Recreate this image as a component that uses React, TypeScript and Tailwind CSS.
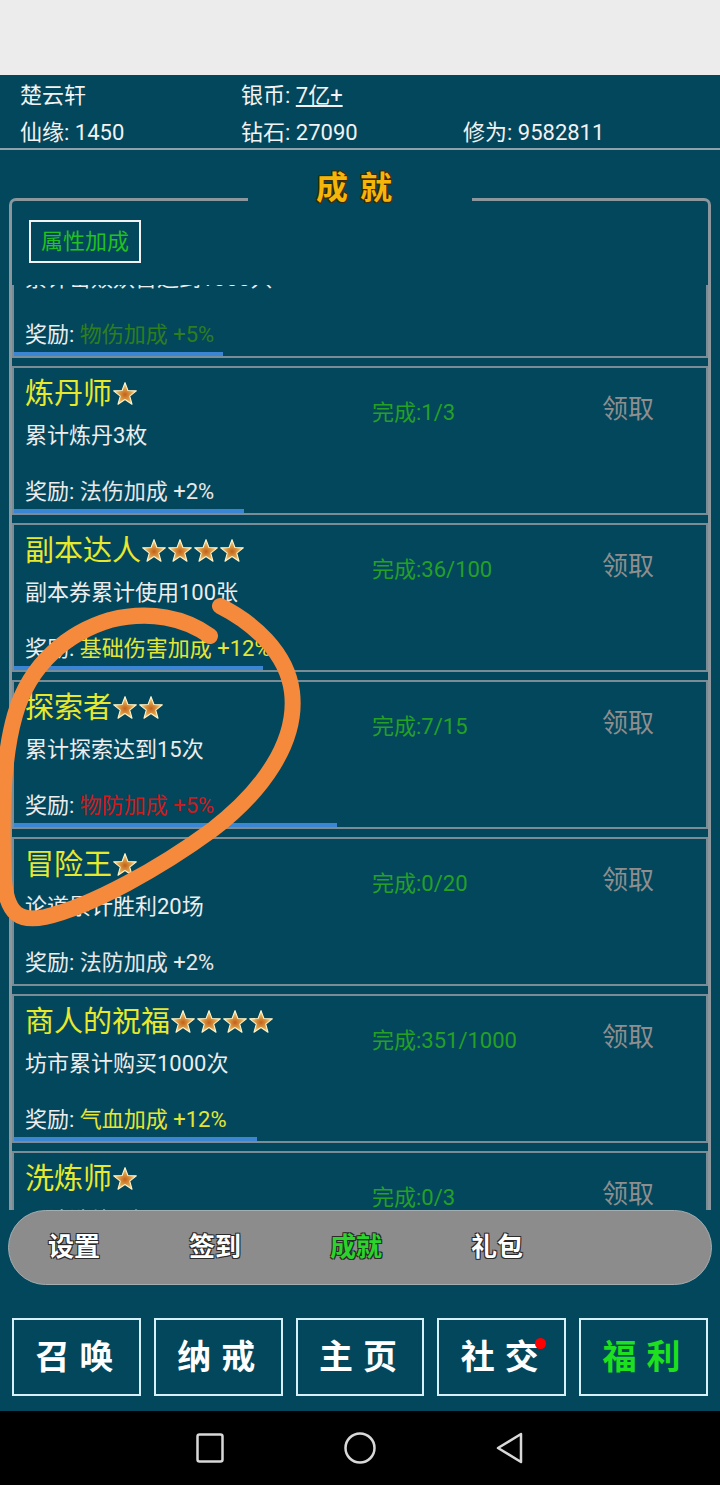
import React from "react";

type Ach = {
  title: string;
  stars: number;
  desc: string;
  done: string;
  reward: string;
  color: string;
  pct: number;
};

const cards: Ach[] = [
  { title: "猎妖者", stars: 1, desc: "累计击败妖兽达到1000只", done: "完成:300/1000", reward: "物伤加成 +5%", color: "text-[#2e7e1e]", pct: 30.2 },
  { title: "炼丹师", stars: 1, desc: "累计炼丹3枚", done: "完成:1/3", reward: "法伤加成 +2%", color: "text-[#e8e8e8]", pct: 33.3 },
  { title: "副本达人", stars: 4, desc: "副本券累计使用100张", done: "完成:36/100", reward: "基础伤害加成 +12%", color: "text-[#e5e633]", pct: 36 },
  { title: "探索者", stars: 2, desc: "累计探索达到15次", done: "完成:7/15", reward: "物防加成 +5%", color: "text-[#d01a1a]", pct: 46.7 },
  { title: "冒险王", stars: 1, desc: "论道累计胜利20场", done: "完成:0/20", reward: "法防加成 +2%", color: "text-[#e8e8e8]", pct: 0 },
  { title: "商人的祝福", stars: 4, desc: "坊市累计购买1000次", done: "完成:351/1000", reward: "气血加成 +12%", color: "text-[#e5e633]", pct: 35.1 },
  { title: "洗炼师", stars: 1, desc: "累计洗炼3次", done: "完成:0/3", reward: "暴击加成 +2%", color: "text-[#e8e8e8]", pct: 0 },
];

function Star() {
  return (
    <svg width="26" height="26" viewBox="0 0 24 24" className="shrink-0">
      <defs>
        <radialGradient id="sg" cx="50%" cy="55%" r="55%">
          <stop offset="0%" stopColor="#c4601a" />
          <stop offset="50%" stopColor="#dea048" />
          <stop offset="100%" stopColor="#fcedb8" />
        </radialGradient>
      </defs>
      <polygon
        points="12,1.5 14.7,8.78 22.46,9.1 16.37,13.92 18.47,21.4 12,17.1 5.53,21.4 7.63,13.92 1.54,9.1 9.3,8.78"
        fill="url(#sg)"
        stroke="#fff4c8"
        strokeWidth="1"
        strokeLinejoin="round"
      />
    </svg>
  );
}

function Card({ a }: { a: Ach }) {
  return (
    <div className="h-[149px] shrink-0 border-2 border-[#7a8d97] flex flex-col">
      <div className="flex pl-[11px]">
        <div className="w-[347px]">
          <div className="pt-[10px] flex items-center h-[42px]">
            <span className="text-[29px] leading-[32px] text-[#e9e92c]">{a.title}</span>
            {Array.from({ length: a.stars }).map((_, i) => (
              <Star key={i} />
            ))}
          </div>
          <div className="mt-[12px] text-[22px] leading-[28px] text-[#ededed]">{a.desc}</div>
        </div>
        <div className="w-[230px] pt-[31px] text-[22px] leading-[28px] text-[#25a025]">{a.done}</div>
        <div className="pt-[26px] text-[26px] leading-[30px] text-[#8e8e8e]">领取</div>
      </div>
      <div className="pl-[11px] mt-[28px] text-[22px] leading-[28px] text-[#ededed]">
        奖励: <span className={a.color}>{a.reward}</span>
      </div>
      <div className="mt-auto h-[4px]">
        <div className="h-full bg-[#3a86d4]" style={{ width: `${a.pct}%` }} />
      </div>
    </div>
  );
}

const outline =
  "[text-shadow:1px_1px_0_#2a2a2a,-1px_-1px_0_#2a2a2a,1px_-1px_0_#2a2a2a,-1px_1px_0_#2a2a2a]";

export default function App() {
  return (
    <div className="relative w-[720px] h-[1485px] overflow-hidden bg-[#03475d] font-['Roboto','Noto_Sans_CJK_SC',sans-serif] text-white">
      {/* status area */}
      <div className="h-[75px] bg-[#ececec]" />

      {/* header */}
      <div className="h-[73px] px-[20px] pt-[2px] text-[22px] text-[#f2f2f2]">
        <div className="flex h-[36px] items-center">
          <div className="w-[221px]">楚云轩</div>
          <div className="w-[222px]">
            银币: <span className="underline">7亿+</span>
          </div>
        </div>
        <div className="flex h-[35px] items-center pt-[4px]">
          <div className="w-[221px]">仙缘: 1450</div>
          <div className="w-[222px]">钻石: 27090</div>
          <div>修为: 9582811</div>
        </div>
      </div>
      <div className="h-[2px] bg-[#8fa2aa]" />

      {/* panel */}
      <div className="mx-[9px]">
        <div className="flex h-[55px]">
          <div className="flex-1 self-end h-[7px] border-t-[3px] border-l-[3px] border-[#8b979d] rounded-tl-[8px]" />
          <div className="w-[224px] pt-[21px] text-center text-[32px] leading-[34px] font-bold tracking-[12px] text-[#f5b60c] [text-shadow:1px_1px_0_#3b2a00,-1px_-1px_0_#3b2a00,1px_-1px_0_#3b2a00,-1px_1px_0_#3b2a00]">
            成就
          </div>
          <div className="flex-1 self-end h-[7px] border-t-[3px] border-r-[3px] border-[#8b979d] rounded-tr-[8px]" />
        </div>
        <div className="border-x-[3px] border-[#8b979d]">
          <div className="pt-[15px] pl-[17px]">
            <div className="w-[112px] h-[43px] border-2 border-[#f2f2f2] flex items-center justify-center text-[22px] text-[#22c022]">
              属性加成
            </div>
          </div>
          <div className="mt-[22px] h-[925px] overflow-hidden">
            <div className="mt-[-76px] flex flex-col gap-[8px]">
              {cards.map((a) => (
                <Card key={a.title} a={a} />
              ))}
            </div>
          </div>
        </div>
      </div>

      {/* tab bar */}
      <div className="mx-[8px] h-[75px] rounded-full bg-[#8c8c8c] border border-[#a3acb0] flex items-center pl-[39px] text-[26px] font-bold">
        <div className={`w-[141px] ${outline}`}>设置</div>
        <div className={`w-[141px] ${outline}`}>签到</div>
        <div className={`w-[141px] text-[#2ad42a] ${outline}`}>成就</div>
        <div className={`w-[141px] ${outline}`}>礼包</div>
      </div>

      {/* bottom buttons */}
      <div className="mt-[33px] px-[12px] flex gap-[13px]">
        {["召唤", "纳戒", "主页", "社交", "福利"].map((t) => (
          <div
            key={t}
            className="relative flex-1 h-[78px] border-2 border-[#d6f2f8] flex items-center justify-center"
          >
            <span
              className={`text-[34px] font-bold tracking-[10px] pl-[6px] ${t === "福利" ? "text-[#1ee01e]" : "text-white"}`}
            >
              {t}
            </span>
            {t === "社交" && (
              <span className="absolute top-[18px] right-[18px] w-[11px] h-[11px] rounded-full bg-[#f00]" />
            )}
          </div>
        ))}
      </div>

      {/* android nav */}
      <div className="mt-[15px] h-[74px] bg-black flex items-center justify-center gap-[118px]">
        <svg width="30" height="30" viewBox="0 0 30 30">
          <rect x="2.5" y="1.5" width="25" height="27" rx="2" fill="none" stroke="#d8d8d8" strokeWidth="2.5" />
        </svg>
        <svg width="34" height="34" viewBox="0 0 34 34">
          <ellipse cx="17" cy="17" rx="14.5" ry="14.5" fill="none" stroke="#d8d8d8" strokeWidth="2.5" />
        </svg>
        <svg width="30" height="32" viewBox="0 0 30 32">
          <path d="M26 2 L3 16 L26 30 Z" fill="none" stroke="#d8d8d8" strokeWidth="2.5" strokeLinejoin="round" />
        </svg>
      </div>

      {/* hand-drawn annotation */}
      <svg className="absolute left-0 top-0 pointer-events-none" width="720" height="1485" viewBox="0 0 720 1485">
        <path
          d="M220 606 C252 622 287 652 292 692 C298 742 262 792 212 830 C160 868 92 906 45 917 C20 922 7 915 4 880 C1 820 2 760 15 715 C30 662 70 632 110 620 C150 610 185 618 210 636"
          fill="none"
          stroke="#f58a3c"
          strokeWidth="16"
          strokeLinecap="round"
          strokeLinejoin="round"
        />
      </svg>
    </div>
  );
}
